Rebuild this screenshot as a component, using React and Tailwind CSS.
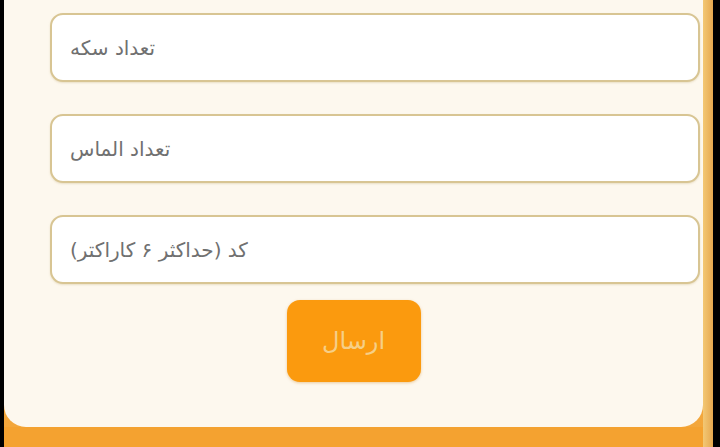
import React from 'react';

const fields = ['تعداد سکه', 'تعداد الماس', 'کد (حداکثر ۶ کاراکتر)'];

const App = () => {
  return (
    <div className="w-[720px] h-[447px] flex bg-black overflow-hidden" style={{ fontFamily: '"DejaVu Sans", sans-serif' }}>
      <div className="w-[4px] shrink-0" />
      <div className="flex-1 flex bg-gradient-to-b from-[#f2b04a] to-[#f3a63a]">
        <div className="flex-1 flex flex-col">
          {/* Form card */}
          <div className="h-[427px] bg-[#fdf8ee] rounded-b-[22px] pt-[13px] flex flex-col">
            <div className="flex flex-col gap-[32px] pl-[46px] pr-[3px]">
              {fields.map((label, i) => (
                <div key={i} className="h-[69px] bg-white rounded-[13px] border-2 border-[#d8c593] flex items-center px-[18px] shadow-[0_1px_2px_rgba(180,150,80,0.25)]">
                  <span dir="rtl" className="text-[20px] text-[#707070]">{label}</span>
                </div>
              ))}
            </div>
            <div className="flex justify-center mt-[16px]">
              <button className="w-[134px] h-[82px] rounded-[13px] bg-[#fb9a0e] text-[#f6cf87] text-[24px] shadow-[0_1px_3px_rgba(200,120,0,0.35)]">
                <span dir="rtl">ارسال</span>
              </button>
            </div>
          </div>
          <div className="flex-1 bg-[#f4a230]" />
        </div>
        <div className="w-[10px] shrink-0 bg-gradient-to-r from-[#f3c874] to-[#e6a84e]" />
      </div>
      <div className="w-[7px] shrink-0" />
    </div>
  );
};

export default App;
